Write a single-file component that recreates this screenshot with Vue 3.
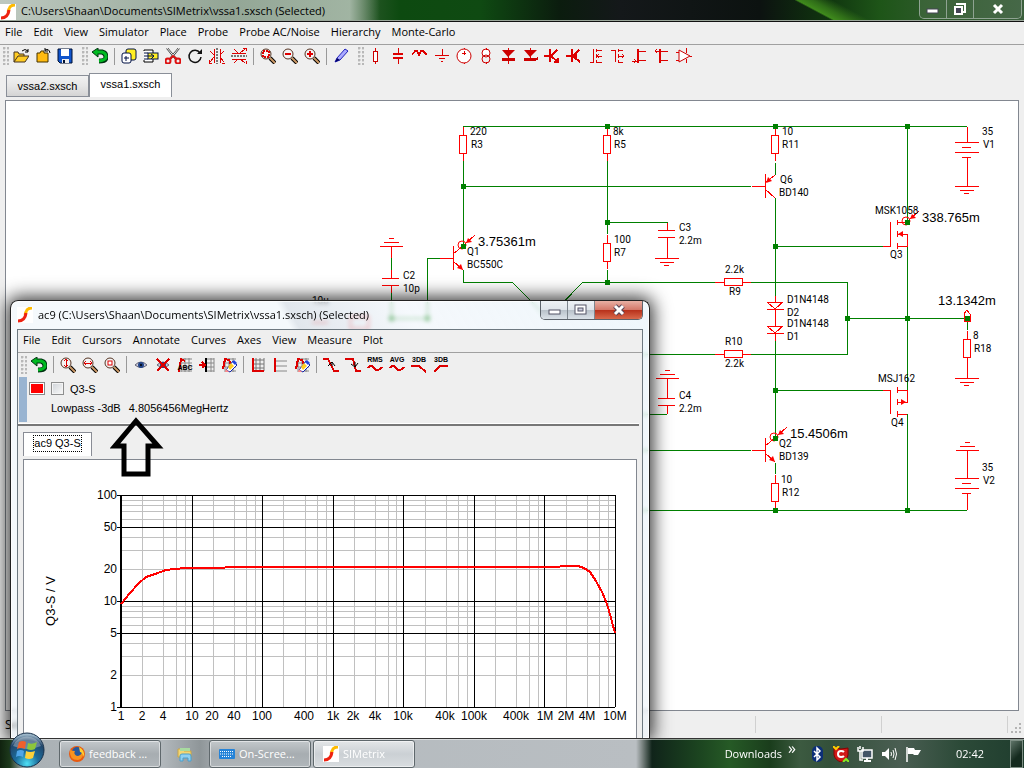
<template>
  <div class="desktop">
    <main class="main-window">
      <header class="title-bar">
        <svg class="app-logo" viewBox="0 0 16 16" aria-hidden="true" v-html="logo"></svg>
        <h1 class="title-text">C:\Users\Shaan\Documents\SIMetrix\vssa1.sxsch (Selected)</h1>
        <div class="caption-buttons glass">
          <button type="button" class="caption-button" aria-label="Minimize">
            <svg width="14" height="12"><rect x="1" y="6" width="11" height="4" fill="#fff" stroke="#445" /></svg>
          </button>
          <button type="button" class="caption-button" aria-label="Restore">
            <svg width="14" height="12">
              <path d="M4 2V1H12V9H10" fill="none" stroke="#fff" stroke-width="2" />
              <rect x="2" y="4" width="7" height="7" fill="#445" stroke="#fff" stroke-width="2" />
            </svg>
          </button>
          <button type="button" class="caption-button close" aria-label="Close">
            <svg width="14" height="12"><path d="M3 2L11 10M11 2L3 10" stroke="#fff" stroke-width="3" /></svg>
          </button>
        </div>
      </header>

      <nav class="menu-bar">
        <button v-for="item in mainMenu" :key="item" type="button" class="menu-item">{{ item }}</button>
      </nav>

      <div class="tool-bar">
        <template v-for="(name, i) in mainTools" :key="i">
          <span v-if="name === 'grip'" class="grip"></span>
          <span v-else-if="name === '|'" class="separator"></span>
          <button v-else type="button" class="tool-button" :aria-label="name">
            <svg viewBox="0 0 16 16" v-html="icons[name]"></svg>
          </button>
        </template>
      </div>

      <div class="sheet-tabs">
        <button
          v-for="tab in sheets"
          :key="tab"
          type="button"
          class="sheet-tab"
          :class="{ active: tab === activeSheet }"
          @click="activeSheet = tab"
        >
          {{ tab }}
        </button>
      </div>

      <section class="sheet">
        <svg class="schematic">
          <g transform="translate(-6 -101)">
            <path class="wire" :d="wires" />
            <path class="part" :d="parts" />
            <path class="part-fill" :d="arrowHeads" />
            <circle v-for="p in probes" :key="p[0]" class="probe" :cx="p[0] - 1" :cy="p[1] - 1" r="4" />
            <rect v-for="(n, i) in nodes" :key="i" class="node" :x="n[0] - 2" :y="n[1] - 2" width="5" height="5" />
            <text v-for="(l, i) in labels" :key="i" class="label" :x="l[0]" :y="l[1]">{{ l[2] }}</text>
            <text v-for="r in readings" :key="r[2]" class="reading" :x="r[0]" :y="r[1]">{{ r[2] }}</text>
          </g>
        </svg>
      </section>

      <footer class="status-bar">
        <span class="status-main">Select</span>
        <span class="status-cell"></span>
        <span class="status-cell"></span>
        <span class="status-corner">
          <svg width="10" height="10" fill="#b4b4b4">
            <path d="M8 0h2v2h-2zM4 4h2v2h-2zM8 4h2v2h-2zM0 8h2v2h-2zM4 8h2v2h-2zM8 8h2v2h-2z" />
          </svg>
        </span>
      </footer>
    </main>

    <section class="graph-window">
      <header class="graph-title">
        <svg class="app-logo" viewBox="0 0 16 16" aria-hidden="true" v-html="logo"></svg>
        <h2 class="title-text">ac9 (C:\Users\Shaan\Documents\SIMetrix\vssa1.sxsch) (Selected)</h2>
        <div class="caption-buttons light">
          <button type="button" class="caption-button" aria-label="Minimize">
            <svg width="14" height="12"><rect x="2" y="6" width="11" height="4" fill="#fff" stroke="#556" /></svg>
          </button>
          <button type="button" class="caption-button" aria-label="Maximize">
            <svg width="14" height="12">
              <rect x="1" y="1" width="11" height="9" fill="#fff" stroke="#556" />
              <rect x="4" y="4" width="5" height="3" fill="#ccd" stroke="#556" />
            </svg>
          </button>
          <button type="button" class="caption-button close" aria-label="Close">
            <svg width="14" height="12">
              <path d="M3 2L11 10M11 2L3 10" stroke="#545" stroke-width="5" />
              <path d="M3 2L11 10M11 2L3 10" stroke="#fff" stroke-width="3" />
            </svg>
          </button>
        </div>
      </header>

      <div class="graph-client">
        <nav class="menu-bar graph-menu">
          <button v-for="item in graphMenu" :key="item" type="button" class="menu-item">{{ item }}</button>
        </nav>

        <div class="tool-bar graph-tools">
          <template v-for="(name, i) in graphTools" :key="i">
            <span v-if="name === 'grip'" class="grip"></span>
            <span v-else-if="name === '|'" class="separator"></span>
            <button v-else type="button" class="tool-button" :aria-label="name">
              <svg viewBox="0 0 16 16" v-html="icons[name]"></svg>
            </button>
          </template>
        </div>

        <div class="legend">
          <div class="legend-row">
            <span class="swatch"></span>
            <input id="curve" v-model="curveOn" type="checkbox" class="check" />
            <label for="curve">Q3-S</label>
          </div>
          <div class="legend-row measure">
            <span>Lowpass -3dB</span>
            <span>4.8056456MegHertz</span>
          </div>
        </div>

        <div class="graph-tabs">
          <button type="button" class="graph-tab"><span>ac9 Q3-S</span></button>
        </div>

        <div class="plot-panel">
          <svg class="plot">
            <g transform="translate(-24 -459)">
              <path class="grid-minor" :d="minorGrid" />
              <path class="grid-major" :d="majorGrid" />
              <path class="axis" d="M121 494V706" />
              <polyline class="curve" :points="curve" />
              <text v-for="y in yLabels" :key="y" class="tick end" x="117" :y="yPos(y) + 4">{{ y }}</text>
              <text v-for="t in xLabels" :key="t[1]" class="tick mid" :x="t[0]" y="719">{{ t[1] }}</text>
              <text class="axis-title" x="-600" y="55" transform="rotate(-90)">Q3-S / V</text>
            </g>
          </svg>
        </div>
      </div>

      <svg class="pointer" viewBox="110 415 54 64" aria-hidden="true">
        <path d="M124 446H115L136 421L158 446H148V474H124Z" />
      </svg>
    </section>

    <footer class="task-bar">
      <button type="button" class="start" aria-label="Start">
        <svg viewBox="0 0 36 36">
          <defs>
            <radialGradient id="orb" cx="50%" cy="90%" r="85%">
              <stop offset="0" stop-color="#4fe0f5" />
              <stop offset="0.4" stop-color="#1c6d9c" />
              <stop offset="0.8" stop-color="#21466b" />
              <stop offset="1" stop-color="#9db7c9" />
            </radialGradient>
          </defs>
          <circle cx="18" cy="18" r="17" fill="url(#orb)" stroke="#17304a" />
          <path d="M4 14A15 15 0 0 1 32 14Q18 20 4 14Z" fill="#fff" opacity="0.3" />
          <path d="M10 10Q14 8 17 10L16 17Q12 15 8 17Z" fill="#f0602c" />
          <path d="M19 11Q23 13 28 10L26 17Q22 19 18 17Z" fill="#8cc63c" />
          <path d="M8 19Q12 17 15 19L14 25Q10 23 7 25Z" fill="#4fa5e8" />
          <path d="M17 19Q21 21 26 19L24 26Q20 28 16 26Z" fill="#fcd13a" />
        </svg>
      </button>
      <button type="button" class="task">
        <svg viewBox="0 0 16 16" v-html="icons.firefox"></svg>feedback ...
      </button>
      <button type="button" class="pinned" aria-label="Explorer">
        <svg viewBox="0 0 16 16" v-html="icons.explorer"></svg>
      </button>
      <button type="button" class="task">
        <svg viewBox="0 0 16 16" v-html="icons.keyboard"></svg>On-Scree...
      </button>
      <button type="button" class="task current">
        <svg viewBox="0 0 16 16" v-html="logo"></svg>SIMetrix
      </button>
      <div class="tray">
        <span class="downloads">Downloads</span>
        <span class="chevron">»</span>
        <button v-for="name in trayIcons" :key="name" type="button" class="tray-button" :aria-label="name">
          <svg viewBox="0 0 16 16" v-html="icons[name]"></svg>
        </button>
        <time class="clock">02:42</time>
        <button type="button" class="show-desktop" aria-label="Show desktop"></button>
      </div>
    </footer>
  </div>
</template>

<script setup>
import { ref } from 'vue'

const sheets = ['vssa2.sxsch', 'vssa1.sxsch']
const activeSheet = ref('vssa1.sxsch')
const curveOn = ref(false)

const mainMenu = ['File', 'Edit', 'View', 'Simulator', 'Place', 'Probe', 'Probe AC/Noise', 'Hierarchy', 'Monte-Carlo']
const graphMenu = ['File', 'Edit', 'Cursors', 'Annotate', 'Curves', 'Axes', 'View', 'Measure', 'Plot']

const mainTools = [
  'grip', 'open', 'close', 'save', 'grip', 'undo', '|',
  'duplicate', 'paste', 'cut', 'rotate', 'mirror', 'flip', '|',
  'zoomBox', 'zoomOut', 'zoomIn', '|', 'pencil', 'grip',
  'resistor', 'capacitor', 'inductor', 'ground', 'vsource', 'isource', 'diode', 'zener',
  'npn', 'pnp', 'nmos', 'pmos', 'njf', 'pjf', 'opamp'
]
const graphTools = [
  'grip', 'undo', '|', 'zoomY', 'zoomX', 'zoomFit', '|',
  'show', 'hide', 'nameCurve', 'moveCurve', 'deleteCurve', '|',
  'addGrid', 'addAxis', 'deleteAxis', '|',
  'rise', 'fall', 'rms', 'avg', 'lowpass', 'highpass'
]
const trayIcons = ['bluetooth', 'comodo', 'network', 'volume', 'flag']

const logo =
  '<rect width="16" height="16" fill="#fff"/><path d="M15 1Q10 1 9 5L8 8" fill="none" stroke="#fb0" stroke-width="3"/><path d="M9 6Q8 14 1 14" fill="none" stroke="#e21" stroke-width="3"/>'

const lens = (inner) =>
  '<path d="M10 10L15 15" stroke="#000" stroke-width="4"/><path d="M10 10L15 15" stroke="#c96" stroke-width="2"/>' +
  '<circle cx="6" cy="6" r="5" fill="#f4f4f4" stroke="#532" stroke-width="1"/>' + inner

const red = (d, w = 1) =>
  `<path d="${d}" fill="none" stroke="#d00" stroke-width="${w}" shape-rendering="crispEdges"/>`
const grey = '<path d="M4 2H15M4 6H15M4 10H15M4 14H15M4 1V15M8 1V15M12 1V15" stroke="#888" fill="none"/>'
const eraser =
  '<path d="M12 4L16 8L9 15L5 13Z" fill="#fff" stroke="#12a"/><path d="M10 6L13 9L9 13L7 10Z" fill="#fc2"/><path d="M13 3L16 6L14 8L11 5Z" fill="#24d"/><path d="M5 12L8 15H4Z" fill="#f88"/>'
const eye =
  '<path d="M2 8Q8 2 14 8Q8 13 2 8Z" fill="#ccd" stroke="#667"/><circle cx="8" cy="8" r="3" fill="#248"/><circle cx="8" cy="8" r="1" fill="#000"/>'
const tiny = (t) =>
  `<text x="8" y="5" text-anchor="middle" font-family="Liberation Sans, sans-serif" font-weight="700" font-size="7">${t}</text>`

const icons = {
  open: '<path d="M1 14V4H5L6 6H11V8" fill="#fc2" stroke="#432"/><path d="M1 14L5 8H16L12 14Z" fill="#fc2" stroke="#432"/><path d="M9 3Q12 0 15 3M15 1V4H12" fill="none" stroke="#000"/>',
  close: '<path d="M2 14V5H5L6 3H9V5H13V14Z" fill="#fb1" stroke="#430"/><path d="M10 2Q14 0 15 5M10 0V3H13" fill="none" stroke="#000"/>',
  save: '<path d="M1 1H15V15H3L1 13Z" fill="#15c" stroke="#013"/><rect x="4" y="1" width="8" height="7" fill="#fff"/><rect x="5" y="11" width="7" height="4" fill="#eee"/><rect x="6" y="12" width="2" height="3" fill="#013"/>',
  undo: '<path d="M5 4H10Q14 5 14 9Q14 13 7 13" fill="none" stroke="#031" stroke-width="5"/><path d="M6 0V9L0 4Z" fill="#0b2" stroke="#031"/><path d="M4 4H10Q14 5 14 9Q14 12 7 13" fill="none" stroke="#0b2" stroke-width="3"/>',
  duplicate: '<rect x="5" y="1" width="10" height="11" rx="2" fill="#fe2" stroke="#014"/><rect x="1" y="5" width="9" height="10" rx="2" fill="#fff" stroke="#014"/><path d="M3 10H8M5 8V13" stroke="#014"/>',
  paste: '<path d="M1 3V2H10V14H1V12" fill="#fff" stroke="#000"/><rect x="5" y="5" width="10" height="6" fill="#fe2" stroke="#014"/><path d="M1 5H5M1 8H11M1 11H5M8 6L11 8L8 11" fill="none" stroke="#014"/>',
  cut: '<path d="M2 0L11 11M14 0L5 11" stroke="#333" stroke-width="2"/><path d="M2 0L11 11M14 0L5 11" stroke="#eee" stroke-width="1"/><circle cx="3" cy="13" r="2.5" fill="none" stroke="#d11" stroke-width="2"/><circle cx="13" cy="13" r="2.5" fill="none" stroke="#d11" stroke-width="2"/><path d="M5 11L8 8L12 11" stroke="#d11" stroke-width="2" fill="none"/>',
  rotate: '<path d="M13 5A6 6 0 1 0 14 9" fill="none" stroke="#111" stroke-width="1.5"/><path d="M10 6H15V1Z" fill="#111"/>',
  mirror: '<path d="M8 0V16" stroke="#000" stroke-dasharray="2 1"/>' + red('M5 1V15M1 3L5 7M1 14L5 9M0 12V15H3M11 1V15M15 3L11 7M15 14L11 9M16 12V15H13'),
  flip: '<path d="M0 8H16" stroke="#000" stroke-dasharray="2 1"/>' + red('M1 5H15M3 1L7 5M14 1L9 5M12 0H15V3M1 11H15M3 15L7 11M14 15L9 11M12 16H15V13'),
  zoomBox: lens('<rect x="3" y="3" width="6" height="6" fill="none" stroke="#d00" stroke-width="2" stroke-dasharray="2 1"/>'),
  zoomOut: lens(red('M3 6H9', 2)),
  zoomIn: lens(red('M3 6H9M6 3V9', 2)),
  zoomY: lens(red('M6 2V10M4 4L6 2L8 4M4 8L6 10L8 8')),
  zoomX: lens(red('M2 6H10M4 4L2 6L4 8M8 4L10 6L8 8')),
  zoomFit: lens('<rect x="4" y="4" width="4" height="4" fill="#fff" stroke="#d00"/>'),
  pencil: '<path d="M2 14L4 10L12 1L15 3L7 12Z" fill="#aaf" stroke="#22b"/><path d="M2 14L4 10L7 12Z" fill="#006"/>',
  resistor: red('M7 0V3M7 13V16') + '<rect x="5" y="3" width="4" height="10" fill="#fff" stroke="#c00" shape-rendering="crispEdges"/>',
  capacitor: red('M8 0V6M8 11V16') + red('M3 6H13M3 10H13', 2),
  inductor: red('M0 7L3 3L5 3L7 7L9 3L11 3L15 7', 1.5),
  ground: red('M8 1V7M5 10H11M7 13H9M1 7H15'),
  vsource: '<circle cx="8" cy="8" r="7" fill="#fff" stroke="#c00"/>' + red('M8 3V7M6 5H10M8 0V1M8 15V16'),
  isource: '<circle cx="8" cy="5" r="4" fill="#fff" stroke="#c00"/><circle cx="8" cy="11" r="4" fill="none" stroke="#c00"/>' + red('M8 0V2M8 14V16'),
  diode: red('M8 0V16') + '<path d="M2 2H15L8 9ZM2 10H15V13H2Z" fill="#c00"/>',
  zener: red('M8 0V13') + '<path d="M2 2H15L8 9ZM2 10H15V9H16V12H14V13H2Z" fill="#c00"/>',
  npn: red('M0 8H6M7 8L13 2M7 8L14 14M10 14H14V10M6 1V14', 2),
  pnp: red('M0 8H6M7 8L13 2M7 8L14 14M10 4V12M6 1V14', 2),
  nmos: red('M2 14H5V1M8 1V4M8 6V10M8 12V15M8 2H14M8 8H14M8 14H14M11 6L9 8L11 10'),
  pmos: red('M1 2H5V14M8 1V4M8 6V10M8 12V15M8 2H13M8 8H14M8 14H13M12 6L14 8L12 10'),
  njf: red('M6 3H14M6 12H14M0 13H6M2 11L4 13L2 15') + red('M6 1V15', 2),
  pjf: red('M6 3H14M6 12H14M1 3H6M3 1L1 3L3 5') + red('M6 1V15', 2),
  opamp: '<path d="M3 2L14 8L3 14Z" fill="#fff" stroke="#c00"/>' + red('M0 4H3M0 12H3M14 8H16M10 0V5M10 11V15'),
  show: eye,
  hide: eye + red('M2 2L14 14M14 2L2 14', 2),
  nameCurve: grey + red('M2 15L4 2L8 4', 2) + '<text x="8" y="13" text-anchor="middle" font-family="Liberation Sans, sans-serif" font-weight="700" font-size="7">ABC</text>',
  moveCurve: '<path d="M7 1V15" stroke="#000" stroke-width="2"/><path d="M8 2H15M8 6H15M8 10H15M8 14H15M12 1V15M15 1V15" stroke="#888"/>' + red('M0 8H5M3 5L6 8L3 11', 1.5),
  deleteCurve: grey + red('M2 12L4 2L8 3L12 12', 2) + eraser,
  addGrid: '<path d="M3 3H14M3 7H14M3 11H14M6 1V14M10 1V14M14 1V14" stroke="#777"/>' + red('M3 1V14H14', 2),
  addAxis: '<path d="M3 4H15M3 9H15M3 14H15" stroke="#888"/>' + red('M3 1V15', 2),
  deleteAxis: grey + red('M2 12L4 2L8 3L12 12', 2) + eraser,
  rise: red('M0 2H5L11 14H16', 2) + '<path d="M5 9L9 5L12 9M9 5V9" stroke="#000" fill="none"/>',
  fall: red('M0 2H8L11 14H16', 2) + '<path d="M6 7L10 10L13 6M10 5V10" stroke="#000" fill="none"/>',
  rms: tiny('RMS') + red('M1 11Q4 6 7 11T15 10', 2),
  avg: tiny('AVG') + red('M1 11Q4 6 7 11T15 10', 2),
  lowpass: tiny('3DB') + red('M0 9H8L15 15', 2),
  highpass: tiny('3DB') + red('M1 15L7 9H15', 2),
  firefox: '<circle cx="8" cy="8" r="8" fill="#e85a10"/><circle cx="8" cy="6" r="5" fill="#27599b"/><path d="M1 4Q0 14 9 14Q15 13 14 5Q12 10 8 10Q4 8 6 5Q3 5 1 4Z" fill="#f7931e"/><path d="M10 1Q16 4 15 11Q13 6 11 6Z" fill="#ffd02e"/>',
  explorer: '<path d="M1 3H6L7 5H14V11H1Z" fill="#f3d675" stroke="#c9a546"/><rect x="3" y="2" width="10" height="3" fill="#a8dba0"/><path d="M3 15V10Q3 8 5 8H12Q14 8 14 10V15H11V12H6V15Z" fill="#8ed0f2" stroke="#4b9fcb"/>',
  keyboard: '<rect x="0" y="3" width="16" height="10" rx="1" fill="#2583d8"/><path d="M1 5.5H15M1 8H15M3 10.5H13" stroke="#fff" stroke-dasharray="1 1"/>',
  bluetooth: '<rect x="3" y="0" width="11" height="16" rx="5" fill="#0c2f78"/><path d="M5 5L11 11L8 14V2L11 5L5 11" fill="none" stroke="#fff" stroke-width="1.5"/>',
  comodo: '<path d="M1 2Q8 4 15 2V9Q14 14 8 16Q2 14 1 9Z" fill="#d11818" stroke="#800"/><path d="M11 6Q10 5 8 5Q5 5 5 8Q5 11 8 11Q10 11 11 10" fill="none" stroke="#fff" stroke-width="2"/><path d="M0 0L3 3L6 0" fill="none" stroke="#fc0" stroke-width="2"/><path d="M10 16L13 13L16 16" fill="none" stroke="#8e2" stroke-width="2"/>',
  network: '<path d="M5 4H15V12H5Z" fill="#456" stroke="#fff" stroke-width="1.5"/><path d="M7 15H14M10 12V15" stroke="#fff" stroke-width="2"/><path d="M1 1V5H6V1M3 5V14H6M3 0V3" fill="none" stroke="#fff" stroke-width="1.5"/>',
  volume: '<path d="M1 6H4L8 2V14L4 10H1Z" fill="#fff"/><path d="M10 6Q11 8 10 10M12 4Q14 8 12 12M14 2Q17 8 14 14" fill="none" stroke="#fff"/>',
  flag: '<path d="M2 1V16" stroke="#fff" stroke-width="1.5"/><path d="M3 2H9L10 4H16L13 9H9L8 8H3Z" fill="#fff"/>'
}

// schematic wiring
const wires = [
  'M463 126H967M463 161V246M463 186H751M427 300V258H440M463 270V282H512L548 318L583 282H715',
  'M391 258V270M391 293V318H427V300M607 161V234M607 270V282M607 222H667V223',
  'M775 163V175M775 198V296M775 246H883M751 282H847V354H751M907 126V222M907 247V390M847 318H967',
  'M775 341V438M600 354H716M600 414H667M775 390H883M907 414V510M600 450H751M775 463V474M600 510H967M967 318V330'
].join('')

const resistorV = (x, y) => `M${x} ${y - 8}V${y}M${x - 4} ${y}H${x + 3}V${y + 18}H${x - 4}ZM${x} ${y + 18}V${y + 26}`
const resistorH = (x, y) => `M${x - 9} ${y}H${x}M${x} ${y - 4}H${x + 18}V${y + 3}H${x}ZM${x + 18} ${y}H${x + 27}`
const groundDown = (x, y) => `M${x - 12} ${y}H${x + 12}M${x - 7} ${y + 4}H${x + 7}M${x - 3} ${y + 7}H${x + 2}`
const groundUp = (x, y) => `M${x - 11} ${y}H${x + 12}M${x - 7} ${y - 4}H${x + 8}M${x - 2} ${y - 8}H${x + 3}`
const plates = (x, y) => `M${x - 9} ${y}H${x + 8}M${x - 9} ${y + 7}H${x + 8}`
const battery = (x, y) => `M${x - 12} ${y}H${x + 12}M${x - 5} ${y + 5}H${x + 4}M${x - 12} ${y + 10}H${x + 12}M${x - 5} ${y + 15}H${x + 4}`
const diode = (x, y) => `M${x - 8} ${y}H${x + 8}L${x} ${y + 7}ZM${x - 8} ${y + 7}H${x + 9}`

const parts = [
  resistorV(463, 135), resistorV(607, 135), resistorV(607, 243), resistorV(775, 135),
  resistorV(967, 339), resistorV(775, 483), resistorH(724, 282), resistorH(724, 354),
  groundUp(391, 246), 'M391 246V258M391 270V278', plates(391, 278), 'M391 285V293',
  'M667 223V230', plates(667, 230), 'M667 237V258', groundDown(667, 258),
  groundUp(667, 378), 'M667 378V398', plates(667, 398), 'M667 405V414',
  'M967 127V142', battery(967, 142), 'M967 157V186', groundDown(967, 186),
  groundUp(967, 450), 'M967 450V478', battery(967, 478), 'M967 493V510',
  'M967 357V378', groundDown(967, 378),
  'M775 296V302', diode(775, 302), 'M775 309V326', diode(775, 326), 'M775 333V341',
  // transistors
  'M440 258H453M453 246V270M453 254L463 246M453 261L463 270',
  'M752 186H765M765 174V198M765 183L775 175M765 189L775 198',
  'M752 450H765M765 438V462M765 446L775 438M765 453L775 462',
  'M883 246H890V222M897 220V225M897 222H907M897 231V237M897 234H907V246H897M897 243V249',
  'M883 390H890V414M897 387V393M897 390H907V402H897M897 399V405M897 411V417M897 414H907',
  // probe tips
  'M475 235L466 243M919 211L910 219M787 427L778 435M964 321V314L967 310L970 314V321Z',
  'M312 322H328M350 316H368V328H350Z'
].join('')

const arrowHeads =
  'M463 270L457 268L461 264ZM766 183L768 177L772 181ZM775 462L769 460L773 456ZM898 234L903 231V237ZM906 402L901 399V405Z' +
  'M466 243L468 238L472 242ZM910 219L912 214L916 218ZM778 435L780 430L784 434Z'

const probes = [[463, 246], [907, 222], [775, 438]]
const nodes = [
  [607, 126], [775, 126], [907, 126], [463, 186], [463, 246], [607, 222], [607, 282],
  [775, 246], [907, 222], [847, 318], [907, 318], [967, 318], [775, 390], [775, 438],
  [775, 510], [907, 510], [391, 318], [427, 318]
]
const labels = [
  [470, 135, '220'], [471, 148, 'R3'], [613, 135, '8k'], [614, 148, 'R5'], [614, 243, '100'], [614, 256, 'R7'],
  [467, 255, 'Q1'], [467, 268, 'BC550C'], [403, 279, 'C2'], [403, 292, '10p'], [679, 231, 'C3'], [679, 244, '2.2m'],
  [782, 135, '10'], [782, 148, 'R11'], [780, 183, 'Q6'], [779, 196, 'BD140'], [875, 214, 'MSK1058'], [890, 258, 'Q3'],
  [982, 135, '35'], [983, 148, 'V1'], [725, 273, '2.2k'], [729, 295, 'R9'], [787, 303, 'D1N4148'], [787, 316, 'D2'],
  [787, 327, 'D1N4148'], [787, 340, 'D1'], [973, 339, '8'], [974, 352, 'R18'], [725, 345, 'R10'], [725, 367, '2.2k'],
  [679, 399, 'C4'], [679, 412, '2.2m'], [878, 382, 'MSJ162'], [891, 426, 'Q4'], [779, 447, 'Q2'], [779, 460, 'BD139'],
  [781, 483, '10'], [782, 496, 'R12'], [982, 471, '35'], [983, 484, 'V2'], [312, 304, '10u']
]
const readings = [
  [478, 246, '3.75361m'], [922, 222, '338.765m'], [938, 305, '13.1342m'], [790, 438, '15.4506m']
]

// log-log plot, 1 Hz to 10 MHz and 1 V to 100 V
const xPos = (v) => Math.round(121 + (494 / 7) * Math.log10(v))
const yPos = (v) => Math.round(706 - 106 * Math.log10(v))
const decades = [0, 1, 2, 3, 4, 5, 6]
const minorX = decades.flatMap((d) => [2, 4, 6, 8].map((m) => m * 10 ** d))
const minorY = [2, 3, 4, 6, 7, 8, 9, 20, 30, 40, 60, 70, 80, 90]
const majorY = [1, 5, 10, 50, 100]
const minorGrid = minorX.map((v) => `M${xPos(v)} 494V706`).join('') + minorY.map((v) => `M121 ${yPos(v)}H615`).join('')
const majorGrid =
  [...decades, 7].map((d) => `M${xPos(10 ** d)} 494V706`).join('') + majorY.map((v) => `M117 ${yPos(v)}H615`).join('')
const yLabels = [100, 50, 20, 10, 5, 2, 1]
const xLabels = [
  [121, '1'], [142, '2'], [163, '4'], [192, '10'], [212, '20'], [234, '40'], [262, '100'], [304, '400'],
  [333, '1k'], [353, '2k'], [375, '4k'], [403, '10k'], [445, '40k'], [474, '100k'], [516, '400k'],
  [545, '1M'], [566, '2M'], [587, '4M'], [615, '10M']
]
const curve =
  '121,603 130,592 139,582 146,576 158,572 166,569 175,568 185,567 224,567 226,566 558,566 562,565 578,565 584,567 590,571 596,580 602,591 607,603 611,617 615,632'
</script>

<style>
body {
  overflow: hidden;
}
</style>

<style scoped>
.desktop {
  position: relative;
  display: flex;
  flex-direction: column;
  height: 100vh;
  overflow: hidden;
  font-family: "Open Sans", "Noto Sans", sans-serif;
  font-size: 11px;
  color: #000;
}

button {
  padding: 0;
  border: 0;
  background: none;
  font: inherit;
  color: inherit;
}

.main-window {
  flex: 1;
  min-height: 0;
  display: flex;
  flex-direction: column;
  background: #efefef;
}

.title-bar {
  display: flex;
  align-items: center;
  box-sizing: border-box;
  height: 22px;
  border-bottom: 1px solid #111;
  box-shadow: inset 0 -1px 0 #9aa69a;
  background:
    linear-gradient(90deg, rgba(205, 214, 207, 0.9) 0, rgba(165, 180, 168, 0.85) 60%, rgba(190, 203, 192, 0.8) 92%, transparent) 0 0 / 380px 100% no-repeat,
    linear-gradient(28deg, transparent 49%, #3f8a1c 51%, #2f6d18 60%, transparent 72%) 750px 0 / 130px 100% no-repeat,
    linear-gradient(90deg, #2d4a30 0, #2c5a2c 360px, #0d4a10 400px, #0f4a12 480px, #0b1c0e 560px, #14181a 620px, #0c1210 760px, #10360f 830px, #1e5518 880px, #2d5a2a 930px, #3a5f3c 100%);
}

.app-logo {
  width: 16px;
  height: 16px;
}

.title-bar .app-logo {
  margin-top: 2px;
}

.title-text {
  flex: 1;
  margin: 0 0 0 5px;
  font-size: 11px;
  font-weight: 400;
  line-height: 18px;
  white-space: nowrap;
}

.caption-buttons {
  display: flex;
  align-self: flex-start;
  border: 1px solid #8fa392;
  border-top: 0;
  border-radius: 0 0 5px 5px;
  overflow: hidden;
}

.caption-button {
  display: flex;
  align-items: center;
  justify-content: center;
  width: 27px;
  height: 18px;
  border-right: 1px solid #8fa392;
}

.caption-button.close {
  width: 47px;
  border-right: 0;
}

.glass {
  margin-right: 2px;
}

.glass .caption-button {
  background: rgba(120, 140, 120, 0.2);
}

.menu-bar {
  display: flex;
  gap: 11px;
  box-sizing: border-box;
  height: 23px;
  padding: 0 5px 4px;
  border-bottom: 1px solid #a0a0a0;
}

.menu-item {
  white-space: nowrap;
}

.tool-bar {
  display: flex;
  align-items: center;
  height: 22px;
  padding: 0 0 1px 3px;
}

.tool-button {
  display: flex;
  align-items: center;
  justify-content: center;
  width: 22px;
  height: 22px;
}

.tool-button svg {
  width: 16px;
  height: 16px;
}

.separator {
  width: 1px;
  height: 17px;
  margin: 0 3px;
  background: #999;
}

.grip {
  width: 6px;
  height: 18px;
  margin-right: 1px;
  background: radial-gradient(circle at 1px 1px, #b8b8b8 1px, transparent 2px) 0 0 / 4px 4px;
}

.tool-button + .grip {
  margin-left: 6px;
}

.sheet-tabs {
  display: flex;
  align-items: flex-end;
  height: 24px;
  margin: 5px 6px 3px;
  font-family: "Liberation Sans", Arial, sans-serif;
}

.sheet-tab {
  box-sizing: border-box;
  width: 83px;
  height: 22px;
  padding-bottom: 1px;
  border: 1px solid #8a8f98;
  background: linear-gradient(#f2f2f2, #e6e6e6 50%, #d4d4d4);
}

.sheet-tab.active {
  height: 24px;
  padding-bottom: 3px;
  border-bottom: 0;
  background: #fff;
}

.sheet {
  flex: 1;
  min-height: 0;
  margin: 0 5px;
  border: 1px solid #828790;
  background: #fff;
}

.schematic,
.plot {
  display: block;
  width: 100%;
  height: 100%;
}

.wire,
.part,
.probe {
  fill: none;
  stroke: #008000;
  shape-rendering: crispEdges;
}

.part,
.probe {
  stroke: #f00;
}

.probe {
  shape-rendering: auto;
}

.part-fill {
  fill: #f00;
}

.node {
  fill: #008000;
}

.label {
  font-family: Roboto, "Liberation Sans", sans-serif;
  font-size: 10px;
}

.reading {
  font-family: "Liberation Sans", Arial, sans-serif;
  font-size: 13px;
}

.status-bar {
  display: flex;
  align-items: center;
  height: 27px;
  padding-left: 5px;
}

.status-main {
  flex: 1;
  font-size: 12px;
}

.status-cell {
  box-sizing: border-box;
  width: 126px;
  height: 17px;
  border-left: 1px solid #d0d0d0;
}

.status-corner {
  display: flex;
  align-items: flex-end;
  justify-content: center;
  box-sizing: border-box;
  width: 17px;
  height: 17px;
  border-left: 1px solid #d0d0d0;
}

.graph-window {
  position: absolute;
  left: 10px;
  top: 300px;
  bottom: 30px;
  display: flex;
  flex-direction: column;
  box-sizing: border-box;
  width: 62.5%;
  padding: 0 6px;
  border: 1px solid #222;
  border-bottom: 0;
  border-radius: 8px 8px 0 0;
  background: linear-gradient(60deg, rgba(238, 245, 250, 0.6) 0 58%, rgba(205, 214, 224, 0.6) 59%, rgba(238, 244, 250, 0.6) 72%, rgba(232, 243, 250, 0.7));
  box-shadow: 0 0 18px 3px rgba(0, 0, 0, 0.8), inset 0 0 0 1px rgba(255, 255, 255, 0.8);
  backdrop-filter: blur(2px);
}

.graph-title {
  display: flex;
  align-items: center;
  height: 28px;
}

.caption-buttons.light {
  border-color: #5c636b;
}

.light .caption-button {
  border-color: #7d858d;
  background: linear-gradient(#eef2f5, #dfe5ea 48%, #b9c2ca 52%, #dbe2e8);
}

.light .caption-button.close {
  background: linear-gradient(#e8b0a4, #d4796a 48%, #b8321c 52%, #d9694b);
}

.graph-client {
  flex: 1;
  min-height: 0;
  display: flex;
  flex-direction: column;
  border: 1px solid #6d7880;
  border-bottom: 0;
  background: #efefef;
}

.graph-tools {
  height: 23px;
}

.legend {
  display: flex;
  flex-direction: column;
  gap: 2px;
  box-sizing: border-box;
  height: 45px;
  margin-left: 1px;
  padding: 3px 0 0 2px;
  border-left: 8px solid #99b4d1;
  font-family: "Liberation Sans", Arial, sans-serif;
}

.legend-row {
  display: flex;
  align-items: center;
  gap: 6px;
  height: 17px;
}

.legend-row.measure {
  gap: 8px;
  padding-left: 22px;
}

.swatch {
  box-sizing: border-box;
  width: 16px;
  height: 13px;
  border: 1px solid #888;
  background: #f00;
  box-shadow: inset 0 0 0 1px #fff;
}

.check {
  appearance: none;
  box-sizing: border-box;
  width: 13px;
  height: 13px;
  margin: 0;
  border: 1px solid #8e8f8f;
  background: linear-gradient(135deg, #cfd3d8, #fafafa);
  box-shadow: inset 0 0 0 1px #f4f4f4;
}

.graph-tabs {
  margin-right: 3px;
  padding: 6px 0 3px 5px;
  border-top: 2px solid #777;
  box-shadow: 0 -1px 0 #fff;
  font-family: "Liberation Sans", Arial, sans-serif;
}

.graph-tab {
  display: block;
  box-sizing: border-box;
  width: 69px;
  height: 24px;
  padding-bottom: 2px;
  border: 1px solid #898c95;
  border-bottom: 0;
  background: #fff;
}

.graph-tab span {
  display: inline-block;
  line-height: 15px;
  border: 1px dotted #000;
}

.plot-panel {
  flex: 1;
  min-height: 0;
  margin: 0 5px;
  border: 1px solid #828790;
  border-bottom: 0;
  background: #fff;
}

.legend + .graph-tabs {
  margin-top: 2px;
}

.grid-minor,
.grid-major,
.axis {
  fill: none;
  stroke: #c0c0c0;
  shape-rendering: crispEdges;
}

.grid-major {
  stroke: #000;
}

.axis {
  stroke: #000;
  stroke-width: 2px;
}

.curve {
  fill: none;
  stroke: #f00;
  stroke-width: 2px;
  shape-rendering: crispEdges;
}

.tick,
.axis-title {
  font-family: "Liberation Sans", Arial, sans-serif;
  font-size: 12px;
}

.end {
  text-anchor: end;
}

.mid,
.axis-title {
  text-anchor: middle;
}

.axis-title {
  font-size: 13px;
}

/* hand-drawn arrow lying over the legend and the tab row */
.pointer {
  position: absolute;
  left: 99px;
  top: 114px;
  width: 54px;
  height: 64px;
}

.pointer path {
  fill: none;
  stroke: #000;
  stroke-width: 5px;
}

.task-bar {
  position: relative;
  display: flex;
  align-items: center;
  box-sizing: border-box;
  height: 30px;
  padding-left: 9px;
  border-top: 1px solid #333;
  color: #fff;
  background:
    linear-gradient(rgba(255, 255, 255, 0.5) 1px, transparent 1px),
    linear-gradient(90deg, #10220f 0, #1d3a1c 10px, #a9b0b4 24px, #b4babe 160px, #8f9699 200px, #b4babe 230px, #b9bec2 636px, #7d8684 642px, #10241a 652px, #1c4520 700px, #265a26 730px, #1a3d1c 770px, #3c5a40 800px, #33503a 830px, #4a5e52 900px, #2c4a38 960px, #1f3d2e 100%);
}

.start {
  align-self: flex-end;
  width: 36px;
  height: 36px;
  margin-right: 14px;
}

.start svg {
  display: block;
}

.task {
  display: flex;
  align-items: center;
  gap: 4px;
  box-sizing: border-box;
  width: 102px;
  height: 28px;
  padding-left: 9px;
  border: 1px solid #5f686c;
  border-radius: 3px;
  background: linear-gradient(#c3c8cb, #a7adb1 50%, #b0b6ba);
  box-shadow: inset 0 0 0 1px rgba(255, 255, 255, 0.5);
  white-space: nowrap;
}

.task.current {
  margin-left: 2px;
  background: linear-gradient(#e3e6e8, #cbd0d4 50%, #d9dde0);
}

.task svg,
.pinned svg,
.tray-button svg {
  display: block;
  width: 16px;
  height: 16px;
}

.pinned {
  display: flex;
  justify-content: center;
  width: 48px;
}

.tray {
  display: flex;
  align-items: center;
  height: 100%;
  margin-left: auto;
}

.chevron {
  margin: 0 9px 0 6px;
  font-size: 16px;
  line-height: 12px;
  padding-bottom: 12px;
}

.tray-button {
  display: flex;
  justify-content: center;
  width: 24px;
}

.clock {
  margin: 0 26px 0 31px;
}

.show-desktop {
  width: 13px;
  height: 28px;
  margin-right: 1px;
  border: 1px solid #7e8f85;
  background: linear-gradient(135deg, #5f7468, #142a1e 60%);
}
</style>
